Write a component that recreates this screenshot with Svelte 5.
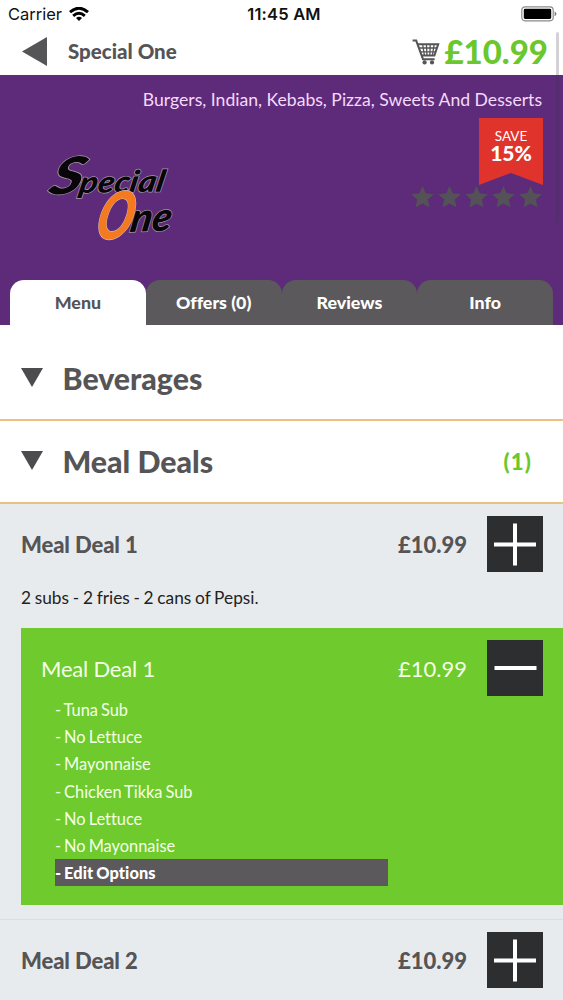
<script lang="ts">
  type Tab = { id: string; label: string };

  const tabs: Tab[] = [
    { id: 'menu', label: 'Menu' },
    { id: 'offers', label: 'Offers (0)' },
    { id: 'reviews', label: 'Reviews' },
    { id: 'info', label: 'Info' },
  ];
  const options = ['Tuna Sub', 'No Lettuce', 'Mayonnaise', 'Chicken Tikka Sub', 'No Lettuce', 'No Mayonnaise'];

  let active = $state('menu');
</script>

{#snippet square(plus: boolean)}
  <button class="square" aria-label={plus ? 'Add' : 'Remove'}>
    <svg viewBox="0 0 56 56" width="56" height="56">
      <path d={plus ? 'M7 28.5H49M28 7.5V49.5' : 'M7.5 28H49.5'} stroke="#fff" stroke-width="4" />
    </svg>
  </button>
{/snippet}

<div class="app">
  <div class="status">
    <div class="carrier">
      <span>Carrier</span>
      <svg width="20" height="14" viewBox="0 0 20 14" fill="none" stroke="#000" stroke-width="2.9">
        <path d="M1 5.2Q10 -2.8 19 5.2" />
        <path d="M4.2 8.8Q10 3.6 15.8 8.8" />
        <path d="M7 11Q10 8.4 13 11L10 13.9Z" fill="#000" stroke="none" />
      </svg>
    </div>
    <span class="time">11:45 AM</span>
    <svg class="battery" width="36" height="16" viewBox="0 0 36 16">
      <rect x="0.8" y="0.8" width="31.4" height="14" rx="3.2" fill="#fff" stroke="#8a8a8a" stroke-width="1.2" />
      <rect x="2.8" y="2.7" width="27.4" height="10.2" rx="1.4" />
      <path d="M33.6 5.4Q35.4 6 35.4 7.8T33.6 10.2Z" fill="#777" />
    </svg>
  </div>

  <header>
    <svg width="25" height="29" viewBox="0 0 25 29"><path d="M0 14.5 25 0V29Z" fill="#555456" /></svg>
    <h1>Special One</h1>
    <div class="basket">
      <svg width="28" height="26" viewBox="0 0 28 26" fill="none" stroke="#555456">
        <path d="M0.6 1.6H4.2L11 20.2H22.6" stroke-width="2" />
        <path d="M5.6 5.2H26.2L22.4 16.6H9.6" stroke-width="2" />
        <path d="M7 9H25M8.4 12.8H23.8M10.6 5.2 12.4 16.4M14.4 5.2 15 16.4M18.2 5.2 17.8 16.4M22.2 5.2 20.4 16.4" stroke-width="1.3" />
        <circle cx="12.6" cy="23.4" r="2.1" fill="#555456" stroke="none" />
        <circle cx="20" cy="23.4" r="2.1" fill="#555456" stroke="none" />
      </svg>
      <span>£10.99</span>
    </div>
  </header>

  <section class="hero">
    <p class="cuisines">Burgers, Indian, Kebabs, Pizza, Sweets And Desserts</p>
    <div class="brand">
      <svg class="logo" width="130" height="92" viewBox="0 0 130 92">
        <g class="script">
          <text font-size="50" textLength="33" lengthAdjust="spacingAndGlyphs" transform="translate(1 44) rotate(-4) skewX(-20)">S</text>
          <text font-size="30" textLength="85" lengthAdjust="spacingAndGlyphs" transform="translate(32 42) rotate(-1) skewX(-12)">pecial</text>
          <text class="orange" font-size="66" textLength="36" lengthAdjust="spacingAndGlyphs" transform="translate(47 88) skewX(-14)">O</text>
          <text font-size="40" textLength="41" lengthAdjust="spacingAndGlyphs" transform="translate(83 81) rotate(-2) skewX(-12)">ne</text>
        </g>
      </svg>
      <div class="deal">
        <div class="ribbon"><small>SAVE</small><b>15%</b></div>
        <div class="stars">
          {#each Array(5) as _}
            <svg width="23" height="22" viewBox="0 0 23 22">
              <path d="M11.5 0 14.7 7.3 22.8 8.2 16.8 13.6 18.5 21.6 11.5 17.5 4.5 21.6 6.2 13.6 0.2 8.2 8.3 7.3Z" fill="#545157" />
            </svg>
          {/each}
        </div>
      </div>
    </div>
    <nav>
      {#each tabs as tab}
        <button class="tab" class:active={active === tab.id} onclick={() => (active = tab.id)}>{tab.label}</button>
      {/each}
    </nav>
  </section>

  <div class="category first">
    <svg width="22" height="19" viewBox="0 0 22 19"><path d="M0 0H22L11 19Z" fill="#4c4c4e" /></svg>
    <h2>Beverages</h2>
  </div>
  <div class="category">
    <svg width="22" height="19" viewBox="0 0 22 19"><path d="M0 0H22L11 19Z" fill="#4c4c4e" /></svg>
    <h2>Meal Deals</h2>
    <span class="count">(1)</span>
  </div>

  <div class="item">
    <div class="row">
      <h3>Meal Deal 1</h3>
      <span class="price">£10.99</span>
      {@render square(true)}
    </div>
    <p class="desc">2 subs - 2 fries - 2 cans of Pepsi.</p>
    <div class="selected">
      <div class="row">
        <h3>Meal Deal 1</h3>
        <span class="price">£10.99</span>
        {@render square(false)}
      </div>
      <ul>
        {#each options as option}
          <li>- {option}</li>
        {/each}
        <li class="edit">- Edit Options</li>
      </ul>
    </div>
  </div>
  <div class="item last">
    <div class="row">
      <h3>Meal Deal 2</h3>
      <span class="price">£10.99</span>
      {@render square(true)}
    </div>
  </div>

  <div class="scrollbar"></div>
</div>

<style>
  :global(body) { background: #fff; }
  .app {
    position: relative; width: 563px; height: 1000px; overflow: hidden;
    font-family: Lato, "Liberation Sans", sans-serif; color: #555456; background: #fff;
    font-variant-ligatures: none;
  }
  h1, h2, h3, p, ul { margin: 0; padding: 0; }
  svg { display: block; flex: none; }
  button { border: 0; padding: 0; font: inherit; font-variant-ligatures: none; }

  .status {
    display: grid; grid-template-columns: 1fr auto 1fr; align-items: center;
    height: 28px; padding: 0 6px 0 8px; color: #111;
    font-family: Inter, "Liberation Sans", sans-serif; font-size: 16.5px;
  }
  .carrier { display: flex; align-items: center; gap: 7px; }
  .time { margin-left: 3px; font-weight: 600; letter-spacing: 0.2px; }
  .battery { justify-self: end; }

  header { display: flex; align-items: center; height: 47px; padding: 0 15px 0 22px; box-sizing: border-box; }
  h1 { margin-left: 21px; font-size: 20.5px; font-weight: 900; line-height: 47px; }
  .basket { display: flex; align-items: center; gap: 4px; margin-left: auto; color: #6ac72c; }
  .basket span { font-size: 33px; font-weight: 900; line-height: 47px; }

  .hero { display: flex; flex-direction: column; height: 250px; background: #5d2b7a; }
  .cuisines { padding: 14px 21px 0; font-size: 17.6px; line-height: 22px; text-align: right; color: #f5d9fa; }
  .brand { display: flex; justify-content: space-between; padding: 7px 20px 0 46px; }
  .logo { margin-top: 33px; overflow: visible; }
  .script text {
    font-family: Lato, sans-serif; font-style: italic; font-weight: 900;
    fill: #080608; stroke: #a597a5; stroke-width: 1.4; paint-order: stroke;
  }
  .script .orange { fill: #f47a20; stroke: #d9b9b0; }
  .deal { display: flex; flex-direction: column; align-items: flex-end; }
  .ribbon {
    display: flex; flex-direction: column; align-items: center; width: 64px; height: 67px;
    padding-top: 10px; box-sizing: border-box; color: #fff; background: #e0332c;
    clip-path: polygon(0 0, 100% 0, 100% 100%, 50% 82%, 0 100%);
  }
  .ribbon small { font-size: 13.5px; line-height: 16px; }
  .ribbon b { font-size: 21px; font-weight: 900; line-height: 18px; }
  .stars { display: flex; gap: 4px; margin: 1px 1px 0 0; }

  nav { display: flex; margin-top: auto; padding: 0 10px; }
  .tab {
    flex: 1; height: 45px; border-radius: 14px 14px 0 0; background: #5b595c; color: #fff;
    font-size: 17.8px; font-weight: 900; line-height: 45px;
  }
  .tab.active { background: #fff; color: #555456; }

  .category {
    display: flex; align-items: center; height: 83px; padding: 0 31px 0 21px;
    box-sizing: border-box; border-bottom: 2px solid #ebc081;
  }
  .category.first { height: 96px; padding-top: 13px; }
  .category svg { margin-top: -2px; }
  h2 { margin: -1px 0 0 19.5px; font-size: 30.3px; font-weight: 900; }
  .count { margin-left: auto; color: #6ac72c; font-size: 22px; font-weight: 900; letter-spacing: 1.2px; }

  .item { background: #e8ebed; padding: 12px 0 14px 21px; border-bottom: 1px solid #d9dfe0; }
  .row { display: flex; align-items: center; padding-right: 20px; }
  h3 { padding-top: 2px; font-size: 22px; font-weight: 900; line-height: 30px; letter-spacing: -0.1px; }
  .price { padding-top: 2px; margin-left: auto; margin-right: 20px; font-size: 22px; font-weight: 900; line-height: 30px; }
  .square { width: 56px; height: 56px; background: #2d2e2f; }
  .desc { height: 56px; color: #222; font-size: 17.3px; line-height: 51px; word-spacing: -0.7px; }
  .selected { height: 277px; padding: 12px 0 0 20px; box-sizing: border-box; background: #6eca2d; color: #f4ffe8; }
  .selected h3, .selected .price { font-weight: 400; }
  .selected h3 { letter-spacing: -0.2px; }
  ul {
    width: 333px; margin: 0 0 0 14px; list-style: none;
    font-size: 16.4px; line-height: 27.2px; word-spacing: -1.2px;
  }
  .edit { background: #5b595c; color: #fff; font-weight: 900; letter-spacing: 0.1px; }
  .last { height: 90px; }

  /* thin overlay scroll indicator */
  .scrollbar { position: absolute; top: 32px; right: 4px; width: 3px; height: 191px; border-radius: 2px; background: rgba(60, 50, 70, 0.22); }
</style>
